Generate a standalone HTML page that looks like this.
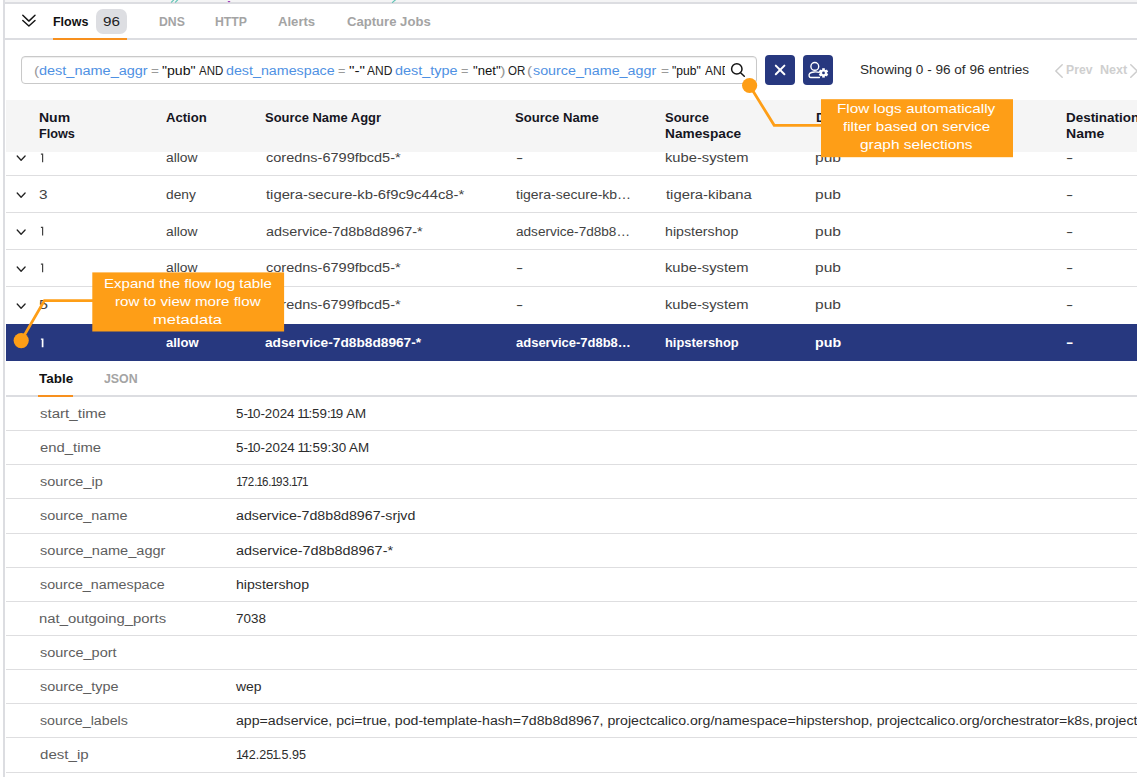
<!DOCTYPE html>
<html><head><meta charset="utf-8"><style>
html,body{margin:0;padding:0;width:1137px;height:777px;overflow:hidden;background:#fff;font-family:"Liberation Sans",sans-serif;}
.t{position:absolute;white-space:pre;transform-origin:0 0;}
.b{position:absolute;}
</style></head><body>
<div class="b" style="left:5px;top:0;width:1132px;height:2px;background:#f4f4f5"></div>
<div class="b" style="left:5px;top:2px;width:1132px;height:2px;background:#dcdde1"></div>
<div class="b" style="left:3px;top:0;width:2px;height:777px;background:#dcdde1"></div>
<svg class="b" style="left:160px;top:0" width="250" height="3"><g stroke="#5fc3b4" stroke-width="1.2" stroke-linecap="round"><line x1="11.5" y1="2.2" x2="13.5" y2="0.2"/><line x1="15.5" y1="2.2" x2="17.5" y2="0.2"/><line x1="232.5" y1="2.4" x2="235.5" y2="-0.2"/></g><ellipse cx="69" cy="1.6" rx="1.4" ry="0.6" fill="#9b2fb5"/></svg>
<!-- tab bar -->
<svg class="b" style="left:0;top:0" width="60" height="40"><g fill="none" stroke="#141414" stroke-width="1.45" stroke-linecap="round" stroke-linejoin="round"><polyline points="22.8,15.3 28.9,21.1 35.0,15.3"/><polyline points="22.8,20.5 28.9,26.0 35.0,20.5"/></g></svg>
<div class="b" style="left:96px;top:9px;width:31px;height:25px;border-radius:7px;background:#dddee2"></div>
<div class="b" style="left:5px;top:38px;width:1132px;height:2px;background:#dcdde1"></div>
<div class="b" style="left:53px;top:38px;width:74px;height:2px;background:#f7901e"></div>
<!-- search -->
<div class="b" style="left:21px;top:56px;width:734px;height:26px;border:1px solid #c9c9c9;border-radius:4px;background:#fff;box-shadow:inset 0 1px 1px rgba(0,0,0,0.07)"></div>
<svg class="b" style="left:720px;top:55px" width="35" height="30"><g fill="none" stroke="#151515" stroke-width="1.5" stroke-linecap="round"><circle cx="16.8" cy="13.9" r="5.2"/><line x1="20.6" y1="17.7" x2="24.3" y2="21.2"/></g></svg>
<div class="b" style="left:765px;top:55px;width:30px;height:30px;border-radius:4px;background:#27387f"></div>
<svg class="b" style="left:765px;top:55px" width="30" height="30"><g stroke="#fff" stroke-width="2" stroke-linecap="round"><line x1="10.8" y1="10.6" x2="19.4" y2="19.2"/><line x1="19.4" y1="10.6" x2="10.8" y2="19.2"/></g></svg>
<div class="b" style="left:803px;top:55px;width:30px;height:30px;border-radius:4px;background:#27387f"></div>
<svg class="b" style="left:803px;top:55px" width="30" height="30"><g fill="none" stroke="#fff" stroke-width="1.4" stroke-linecap="round"><circle cx="11.8" cy="11.4" r="3.9"/><path d="M16.2,17.4 C13.5,16.6 8.5,16.6 6.6,18.6 C5.6,19.8 6.0,22.5 7.6,22.5 L16.4,22.5"/></g><g transform="translate(20.5,17.9)" fill="#fff"><circle r="3.4"/><rect x="-1.3" y="-4.7" width="2.6" height="9.4"/><rect x="-1.3" y="-4.7" width="2.6" height="9.4" transform="rotate(60)"/><rect x="-1.3" y="-4.7" width="2.6" height="9.4" transform="rotate(120)"/><circle r="1.4" fill="#27387f"/></g></svg>
<svg class="b" style="left:1050px;top:60px" width="87" height="22"><g fill="none" stroke="#cdcdcd" stroke-width="1.5" stroke-linecap="round" stroke-linejoin="round"><polyline points="12.2,4.8 5.8,11 12.2,17.2"/><polyline points="80.8,4.8 87.2,11 80.8,17.2"/></g></svg>
<!-- table header -->
<div class="b" style="left:6px;top:100px;width:1131px;height:52px;background:#f5f5f5"></div>
<div class="b" style="left:6px;top:175px;width:1131px;height:1px;background:#dedee0"></div>
<div class="b" style="left:6px;top:212px;width:1131px;height:1px;background:#dedee0"></div>
<div class="b" style="left:6px;top:249px;width:1131px;height:1px;background:#dedee0"></div>
<div class="b" style="left:6px;top:286px;width:1131px;height:1px;background:#dedee0"></div>
<svg class="b" style="left:10px;top:151.6px" width="20" height="12"><polyline points="7.2,4 11.1,8.2 15.1,4" fill="none" stroke="#222" stroke-width="1.3" stroke-linecap="round" stroke-linejoin="round"/></svg>
<svg class="b" style="left:10px;top:188.6px" width="20" height="12"><polyline points="7.2,4 11.1,8.2 15.1,4" fill="none" stroke="#222" stroke-width="1.3" stroke-linecap="round" stroke-linejoin="round"/></svg>
<svg class="b" style="left:10px;top:225.6px" width="20" height="12"><polyline points="7.2,4 11.1,8.2 15.1,4" fill="none" stroke="#222" stroke-width="1.3" stroke-linecap="round" stroke-linejoin="round"/></svg>
<svg class="b" style="left:10px;top:262.6px" width="20" height="12"><polyline points="7.2,4 11.1,8.2 15.1,4" fill="none" stroke="#222" stroke-width="1.3" stroke-linecap="round" stroke-linejoin="round"/></svg>
<svg class="b" style="left:10px;top:299.6px" width="20" height="12"><polyline points="7.2,4 11.1,8.2 15.1,4" fill="none" stroke="#222" stroke-width="1.3" stroke-linecap="round" stroke-linejoin="round"/></svg>
<div class="b" style="left:6px;top:324px;width:1131px;height:37px;background:#27387f"></div>
<div class="b" style="left:6px;top:395px;width:1131px;height:2px;background:#dcdde1"></div>
<div class="b" style="left:38px;top:395px;width:35px;height:2px;background:#f7901e"></div>
<div class="b" style="left:6px;top:430px;width:1131px;height:1px;background:#dedee0"></div>
<div class="b" style="left:6px;top:464px;width:1131px;height:1px;background:#dedee0"></div>
<div class="b" style="left:6px;top:498px;width:1131px;height:1px;background:#dedee0"></div>
<div class="b" style="left:6px;top:533px;width:1131px;height:1px;background:#dedee0"></div>
<div class="b" style="left:6px;top:567px;width:1131px;height:1px;background:#dedee0"></div>
<div class="b" style="left:6px;top:601px;width:1131px;height:1px;background:#dedee0"></div>
<div class="b" style="left:6px;top:635px;width:1131px;height:1px;background:#dedee0"></div>
<div class="b" style="left:6px;top:669px;width:1131px;height:1px;background:#dedee0"></div>
<div class="b" style="left:6px;top:703px;width:1131px;height:1px;background:#dedee0"></div>
<div class="b" style="left:6px;top:737px;width:1131px;height:1px;background:#dedee0"></div>
<div class="b" style="left:6px;top:772px;width:1131px;height:1px;background:#dedee0"></div>
<svg class="b" style="left:0;top:0;z-index:1" width="60" height="164"><path d="M40.9,153.40 L43.20,153.40 L43.20,162.20 L42.00,162.20 L42.00,154.70 L40.9,154.70 Z" fill="#424242"/></svg><svg class="b" style="left:0;top:0;z-index:1" width="60" height="237"><path d="M40.9,226.80 L43.20,226.80 L43.20,235.60 L42.00,235.60 L42.00,228.10 L40.9,228.10 Z" fill="#424242"/></svg><svg class="b" style="left:0;top:0;z-index:1" width="60" height="274"><path d="M40.9,263.50 L43.20,263.50 L43.20,272.30 L42.00,272.30 L42.00,264.80 L40.9,264.80 Z" fill="#424242"/></svg><svg class="b" style="left:0;top:0;z-index:1" width="60" height="349"><path d="M40.9,338.40 L43.45,338.40 L43.45,347.20 L41.75,347.20 L41.75,339.70 L40.9,339.70 Z" fill="#ffffff"/></svg>
<div class="t" style="left:52.81px;top:15.80px;font-size:12px;line-height:12px;color:#111;font-weight:bold;transform:scaleX(1.0402);">Flows</div><div class="t" style="left:103.13px;top:15.80px;font-size:12px;line-height:12px;color:#222;transform:scaleX(1.2690);">96</div><div class="t" style="left:158.73px;top:15.80px;font-size:12px;line-height:12px;color:#a4a4a4;font-weight:bold;transform:scaleX(1.0195);">DNS</div><div class="t" style="left:215.43px;top:15.80px;font-size:12px;line-height:12px;color:#a4a4a4;font-weight:bold;transform:scaleX(1.0213);">HTTP</div><div class="t" style="left:278.46px;top:15.80px;font-size:12px;line-height:12px;color:#a4a4a4;font-weight:bold;transform:scaleX(1.0927);">Alerts</div><div class="t" style="left:347.11px;top:15.80px;font-size:12px;line-height:12px;color:#a4a4a4;font-weight:bold;transform:scaleX(1.0912);">Capture Jobs</div><div class="t" style="left:33.91px;top:65.00px;font-size:12px;line-height:12px;color:#9a9a9a;transform:scaleX(1.2901);">(</div><div class="t" style="left:39.30px;top:65.00px;font-size:12px;line-height:12px;color:#4f91e3;transform:scaleX(1.2065);">dest_name_aggr</div><div class="t" style="left:151.30px;top:65.00px;font-size:12px;line-height:12px;color:#9a9a9a;transform:scaleX(1.1235);">=</div><div class="t" style="left:162.32px;top:65.00px;font-size:12px;line-height:12px;color:#111;transform:scaleX(1.1770);">&quot;pub&quot;</div><div class="t" style="left:198.69px;top:65.00px;font-size:12px;line-height:12px;color:#222;transform:scaleX(0.9570);">AND</div><div class="t" style="left:225.91px;top:65.00px;font-size:12px;line-height:12px;color:#4f91e3;transform:scaleX(1.1885);">dest_namespace</div><div class="t" style="left:338.04px;top:65.00px;font-size:12px;line-height:12px;color:#9a9a9a;transform:scaleX(1.0554);">=</div><div class="t" style="left:348.96px;top:65.00px;font-size:12px;line-height:12px;color:#111;transform:scaleX(1.2781);">&quot;-&quot;</div><div class="t" style="left:367.48px;top:65.00px;font-size:12px;line-height:12px;color:#222;transform:scaleX(0.9979);">AND</div><div class="t" style="left:395.21px;top:65.00px;font-size:12px;line-height:12px;color:#4f91e3;transform:scaleX(1.2012);">dest_type</div><div class="t" style="left:460.84px;top:65.00px;font-size:12px;line-height:12px;color:#9a9a9a;transform:scaleX(1.0554);">=</div><div class="t" style="left:472.57px;top:65.00px;font-size:12px;line-height:12px;color:#111;transform:scaleX(1.0939);">&quot;net&quot;</div><div class="t" style="left:499.71px;top:65.00px;font-size:12px;line-height:12px;color:#9a9a9a;transform:scaleX(1.3772);">)</div><div class="t" style="left:508.02px;top:65.00px;font-size:12px;line-height:12px;color:#222;transform:scaleX(0.9606);">OR</div><div class="t" style="left:527.41px;top:65.00px;font-size:12px;line-height:12px;color:#9a9a9a;transform:scaleX(1.2901);">(</div><div class="t" style="left:533.28px;top:65.00px;font-size:12px;line-height:12px;color:#4f91e3;transform:scaleX(1.1909);">source_name_aggr</div><div class="t" style="left:660.58px;top:65.00px;font-size:12px;line-height:12px;color:#9a9a9a;transform:scaleX(1.1405);">=</div><div class="t" style="left:671.62px;top:65.00px;font-size:12px;line-height:12px;color:#111;transform:scaleX(1.0041);">&quot;pub&quot;</div><div style="position:absolute;left:0;top:0;width:725px;height:777px;overflow:hidden"><div class="t" style="left:704.68px;top:65.00px;font-size:12px;line-height:12px;color:#222;transform:scaleX(1.0020);">AND</div></div><div class="t" style="left:859.69px;top:64.20px;font-size:12px;line-height:12px;color:#2a2a2a;transform:scaleX(1.1309);">Showing 0 - 96 of 96 entries</div><div class="t" style="left:1065.74px;top:64.00px;font-size:12px;line-height:12px;color:#cfcfcf;font-weight:bold;transform:scaleX(1.0160);">Prev</div><div class="t" style="left:1099.70px;top:64.00px;font-size:12px;line-height:12px;color:#cfcfcf;font-weight:bold;transform:scaleX(1.0458);">Next</div><div class="t" style="left:39.28px;top:112.20px;font-size:12px;line-height:12px;color:#16161f;font-weight:bold;transform:scaleX(1.1675);">Num</div><div class="t" style="left:39.39px;top:128.00px;font-size:12px;line-height:12px;color:#16161f;font-weight:bold;transform:scaleX(1.0557);">Flows</div><div class="t" style="left:165.96px;top:112.20px;font-size:12px;line-height:12px;color:#16161f;font-weight:bold;transform:scaleX(1.0922);">Action</div><div class="t" style="left:265.38px;top:112.20px;font-size:12px;line-height:12px;color:#16161f;font-weight:bold;transform:scaleX(1.0780);">Source Name Aggr</div><div class="t" style="left:515.37px;top:112.20px;font-size:12px;line-height:12px;color:#16161f;font-weight:bold;transform:scaleX(1.0914);">Source Name</div><div class="t" style="left:665.38px;top:112.20px;font-size:12px;line-height:12px;color:#16161f;font-weight:bold;transform:scaleX(1.0783);">Source</div><div class="t" style="left:665.31px;top:128.00px;font-size:12px;line-height:12px;color:#16161f;font-weight:bold;transform:scaleX(1.1411);">Namespace</div><div class="t" style="left:815.63px;top:112.20px;font-size:12px;line-height:12px;color:#16161f;font-weight:bold;transform:scaleX(1.1192);">Destination</div><div class="t" style="left:1065.63px;top:111.80px;font-size:12px;line-height:12px;color:#16161f;font-weight:bold;transform:scaleX(1.1192);">Destination</div><div class="t" style="left:1065.57px;top:127.80px;font-size:12px;line-height:12px;color:#16161f;font-weight:bold;transform:scaleX(1.1701);">Name</div><div class="t" style="left:166.21px;top:152.20px;font-size:12px;line-height:12px;color:#424242;transform:scaleX(1.1523);">allow</div><div class="t" style="left:265.80px;top:152.20px;font-size:12px;line-height:12px;color:#424242;transform:scaleX(1.2087);">coredns-6799fbcd5-*</div><div class="t" style="left:515.83px;top:152.20px;font-size:12px;line-height:12px;color:#424242;transform:scaleX(1.7895);">-</div><div class="t" style="left:664.85px;top:152.20px;font-size:12px;line-height:12px;color:#424242;transform:scaleX(1.2268);">kube-system</div><div class="t" style="left:814.98px;top:152.20px;font-size:12px;line-height:12px;color:#424242;transform:scaleX(1.2951);">pub</div><div class="t" style="left:1065.93px;top:152.20px;font-size:12px;line-height:12px;color:#424242;transform:scaleX(1.7895);">-</div><div class="t" style="left:39.49px;top:188.90px;font-size:12px;line-height:12px;color:#424242;transform:scaleX(1.2793);">3</div><div class="t" style="left:166.24px;top:188.90px;font-size:12px;line-height:12px;color:#424242;transform:scaleX(1.1445);">deny</div><div class="t" style="left:266.00px;top:188.90px;font-size:12px;line-height:12px;color:#424242;transform:scaleX(1.2332);">tigera-secure-kb-6f9c9c44c8-*</div><div class="t" style="left:516.43px;top:188.90px;font-size:12px;line-height:12px;color:#424242;transform:scaleX(1.1661);">tigera-secure-kb…</div><div class="t" style="left:665.70px;top:188.90px;font-size:12px;line-height:12px;color:#424242;transform:scaleX(1.2354);">tigera-kibana</div><div class="t" style="left:814.98px;top:188.90px;font-size:12px;line-height:12px;color:#424242;transform:scaleX(1.2951);">pub</div><div class="t" style="left:1065.93px;top:188.90px;font-size:12px;line-height:12px;color:#424242;transform:scaleX(1.7895);">-</div><div class="t" style="left:166.21px;top:225.60px;font-size:12px;line-height:12px;color:#424242;transform:scaleX(1.1523);">allow</div><div class="t" style="left:265.78px;top:225.60px;font-size:12px;line-height:12px;color:#424242;transform:scaleX(1.1979);">adservice-7d8b8d8967-*</div><div class="t" style="left:516.22px;top:225.60px;font-size:12px;line-height:12px;color:#424242;transform:scaleX(1.1315);">adservice-7d8b8…</div><div class="t" style="left:664.90px;top:225.60px;font-size:12px;line-height:12px;color:#424242;transform:scaleX(1.1826);">hipstershop</div><div class="t" style="left:814.98px;top:225.60px;font-size:12px;line-height:12px;color:#424242;transform:scaleX(1.2951);">pub</div><div class="t" style="left:1065.93px;top:225.60px;font-size:12px;line-height:12px;color:#424242;transform:scaleX(1.7895);">-</div><div class="t" style="left:166.21px;top:262.30px;font-size:12px;line-height:12px;color:#424242;transform:scaleX(1.1523);">allow</div><div class="t" style="left:265.80px;top:262.30px;font-size:12px;line-height:12px;color:#424242;transform:scaleX(1.2087);">coredns-6799fbcd5-*</div><div class="t" style="left:515.83px;top:262.30px;font-size:12px;line-height:12px;color:#424242;transform:scaleX(1.7895);">-</div><div class="t" style="left:664.85px;top:262.30px;font-size:12px;line-height:12px;color:#424242;transform:scaleX(1.2268);">kube-system</div><div class="t" style="left:814.98px;top:262.30px;font-size:12px;line-height:12px;color:#424242;transform:scaleX(1.2951);">pub</div><div class="t" style="left:1065.93px;top:262.30px;font-size:12px;line-height:12px;color:#424242;transform:scaleX(1.7895);">-</div><div class="t" style="left:39.49px;top:299.20px;font-size:12px;line-height:12px;color:#424242;transform:scaleX(1.3500);">5</div><div class="t" style="left:166.21px;top:299.20px;font-size:12px;line-height:12px;color:#424242;transform:scaleX(1.1523);">allow</div><div class="t" style="left:265.80px;top:299.20px;font-size:12px;line-height:12px;color:#424242;transform:scaleX(1.2087);">coredns-6799fbcd5-*</div><div class="t" style="left:515.83px;top:299.20px;font-size:12px;line-height:12px;color:#424242;transform:scaleX(1.7895);">-</div><div class="t" style="left:664.85px;top:299.20px;font-size:12px;line-height:12px;color:#424242;transform:scaleX(1.2268);">kube-system</div><div class="t" style="left:814.98px;top:299.20px;font-size:12px;line-height:12px;color:#424242;transform:scaleX(1.2951);">pub</div><div class="t" style="left:1065.93px;top:299.20px;font-size:12px;line-height:12px;color:#424242;transform:scaleX(1.7895);">-</div><div class="t" style="left:165.86px;top:337.20px;font-size:12px;line-height:12px;color:#ffffff;font-weight:bold;transform:scaleX(1.0849);">allow</div><div class="t" style="left:265.43px;top:337.20px;font-size:12px;line-height:12px;color:#ffffff;font-weight:bold;transform:scaleX(1.1418);">adservice-7d8b8d8967-*</div><div class="t" style="left:515.86px;top:337.20px;font-size:12px;line-height:12px;color:#ffffff;font-weight:bold;transform:scaleX(1.0825);">adservice-7d8b8…</div><div class="t" style="left:664.57px;top:337.20px;font-size:12px;line-height:12px;color:#ffffff;font-weight:bold;transform:scaleX(1.0732);">hipstershop</div><div class="t" style="left:814.64px;top:337.20px;font-size:12px;line-height:12px;color:#ffffff;font-weight:bold;transform:scaleX(1.1902);">pub</div><div class="t" style="left:1065.59px;top:337.20px;font-size:12px;line-height:12px;color:#ffffff;font-weight:bold;transform:scaleX(1.8329);">-</div><div class="t" style="left:38.75px;top:372.80px;font-size:12px;line-height:12px;color:#111;font-weight:bold;transform:scaleX(1.1223);">Table</div><div class="t" style="left:104.39px;top:372.80px;font-size:12px;line-height:12px;color:#a4a4a4;font-weight:bold;transform:scaleX(1.0299);">JSON</div><div class="t" style="left:39.74px;top:408.00px;font-size:12px;line-height:12px;color:#5e5e5e;transform:scaleX(1.2560);">start_time</div><div class="t" style="left:235.56px;top:408.00px;font-size:12px;line-height:12px;color:#2c2c2c;transform:scaleX(1.1107);">5-<span style="margin:0 -1.2px 0 -0.9px">1</span>0-2024 <span style="margin:0 -1.2px 0 -0.9px">1</span><span style="margin:0 -1.2px 0 -0.9px">1</span>:59:<span style="margin:0 -1.2px 0 -0.9px">1</span>9 AM</div><div class="t" style="left:39.79px;top:442.00px;font-size:12px;line-height:12px;color:#5e5e5e;transform:scaleX(1.2365);">end_time</div><div class="t" style="left:235.55px;top:442.00px;font-size:12px;line-height:12px;color:#2c2c2c;transform:scaleX(1.1173);">5-<span style="margin:0 -1.2px 0 -0.9px">1</span>0-2024 <span style="margin:0 -1.2px 0 -0.9px">1</span><span style="margin:0 -1.2px 0 -0.9px">1</span>:59:30 AM</div><div class="t" style="left:39.77px;top:476.00px;font-size:12px;line-height:12px;color:#5e5e5e;transform:scaleX(1.2051);">source_ip</div><div class="t" style="left:236.71px;top:476.00px;font-size:12px;line-height:12px;color:#2c2c2c;transform:scaleX(0.9614);"><span style="margin:0 -1.2px 0 -0.9px">1</span>72.<span style="margin:0 -1.2px 0 -0.9px">1</span>6.<span style="margin:0 -1.2px 0 -0.9px">1</span>93.<span style="margin:0 -1.2px 0 -0.9px">1</span>7<span style="margin:0 -1.2px 0 -0.9px">1</span></div><div class="t" style="left:39.77px;top:510.00px;font-size:12px;line-height:12px;color:#5e5e5e;transform:scaleX(1.2025);">source_name</div><div class="t" style="left:236.09px;top:510.00px;font-size:12px;line-height:12px;color:#2c2c2c;transform:scaleX(1.1841);">adservice-7d8b8d8967-srjvd</div><div class="t" style="left:39.76px;top:545.00px;font-size:12px;line-height:12px;color:#5e5e5e;transform:scaleX(1.2133);">source_name_aggr</div><div class="t" style="left:236.08px;top:545.00px;font-size:12px;line-height:12px;color:#2c2c2c;transform:scaleX(1.2010);">adservice-7d8b8d8967-*</div><div class="t" style="left:39.78px;top:579.00px;font-size:12px;line-height:12px;color:#5e5e5e;transform:scaleX(1.1901);">source_namespace</div><div class="t" style="left:235.51px;top:579.00px;font-size:12px;line-height:12px;color:#2c2c2c;transform:scaleX(1.1776);">hipstershop</div><div class="t" style="left:39.11px;top:613.00px;font-size:12px;line-height:12px;color:#5e5e5e;transform:scaleX(1.2368);">nat_outgoing_ports</div><div class="t" style="left:236.09px;top:613.00px;font-size:12px;line-height:12px;color:#2c2c2c;transform:scaleX(1.1213);">7038</div><div class="t" style="left:39.77px;top:647.00px;font-size:12px;line-height:12px;color:#5e5e5e;transform:scaleX(1.2080);">source_port</div><div class="t" style="left:39.77px;top:681.00px;font-size:12px;line-height:12px;color:#5e5e5e;transform:scaleX(1.2000);">source_type</div><div class="t" style="left:236.48px;top:681.00px;font-size:12px;line-height:12px;color:#2c2c2c;transform:scaleX(1.1604);">wep</div><div class="t" style="left:39.78px;top:715.00px;font-size:12px;line-height:12px;color:#5e5e5e;transform:scaleX(1.1869);">source_labels</div><div class="t" style="left:236.09px;top:715.00px;font-size:12px;line-height:12px;color:#2c2c2c;transform:scaleX(1.1784);">app=adservice, pci=true, pod-template-hash=7d8b8d8967, projectcalico.org/namespace=hipstershop, projectcalico.org/orchestrator=k8s,</div><div class="t" style="left:39.78px;top:749.00px;font-size:12px;line-height:12px;color:#5e5e5e;transform:scaleX(1.2563);">dest_ip</div><div class="t" style="left:236.71px;top:749.00px;font-size:12px;line-height:12px;color:#2c2c2c;transform:scaleX(1.0466);"><span style="margin:0 -1.2px 0 -0.9px">1</span>42.25<span style="margin:0 -1.2px 0 -0.9px">1</span>.5.95</div><div class="t" style="left:1094.71px;top:715.00px;font-size:12px;line-height:12px;color:#2c2c2c;transform:scaleX(1.1780);">project</div><div class="t" style="left:103.93px;top:276.90px;font-size:13px;line-height:13px;color:#fff;z-index:10;transform:scaleX(1.1560);">Expand the flow log table</div><div class="t" style="left:114.70px;top:294.80px;font-size:13px;line-height:13px;color:#fff;z-index:10;transform:scaleX(1.1648);">row to view more flow</div><div class="t" style="left:153.38px;top:312.60px;font-size:13px;line-height:13px;color:#fff;z-index:10;transform:scaleX(1.2723);">metadata</div><div class="t" style="left:836.81px;top:102.30px;font-size:13px;line-height:13px;color:#fff;z-index:10;transform:scaleX(1.1772);">Flow logs automatically</div><div class="t" style="left:842.80px;top:120.10px;font-size:13px;line-height:13px;color:#fff;z-index:10;transform:scaleX(1.1648);">filter based on service</div><div class="t" style="left:860.38px;top:137.90px;font-size:13px;line-height:13px;color:#fff;z-index:10;transform:scaleX(1.1892);">graph selections</div>
<svg class="b" style="z-index:5;left:0;top:0" width="1137" height="400"><g fill="#fe9e17"><rect x="92.3" y="272.4" width="191.8" height="59.1"/><rect x="821" y="99.2" width="192" height="58"/></g><g fill="none" stroke="#fe9e17" stroke-width="2.8" stroke-linejoin="miter"><polyline points="21.2,340.6 44.4,300.6 93,300.6"/><polyline points="749.6,85.5 774.2,125.3 822,125.3"/></g><g fill="#fe9e17"><circle cx="21.2" cy="340.6" r="7.6"/><circle cx="749.6" cy="85.5" r="7.6"/></g></svg>

</body></html>
